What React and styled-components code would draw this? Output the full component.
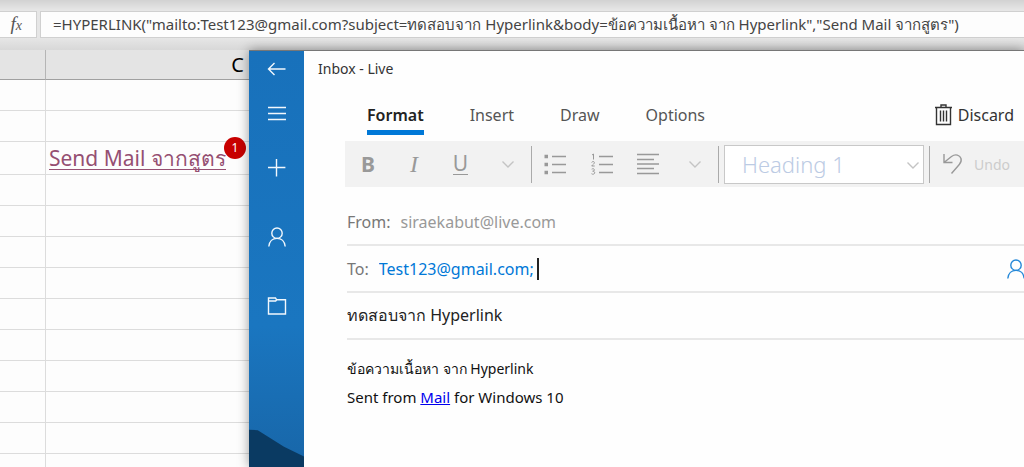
import React from "react";
import styled, { createGlobalStyle, css } from "styled-components";

const rows = [0, 1, 2, 3, 4, 5, 6, 7, 8, 9, 10, 11, 12];
const tabs = ["Format", "Insert", "Draw", "Options"];

const formulaText =
  '=HYPERLINK("mailto:Test123@gmail.com?subject=ทดสอบจาก Hyperlink&body=ข้อความเนื้อหา จาก Hyperlink","Send Mail จากสูตร")';

const PersonIcon = () => (
  <Icon viewBox="0 0 20 20">
    <circle cx="10" cy="6.2" r="5.2" />
    <path d="M1.8 19.5c.5-5 3.8-8.1 8.2-8.1s7.7 3.1 8.2 8.1" />
  </Icon>
);

const ChevronIcon = () => (
  <Icon $size={14} viewBox="0 0 14 14">
    <path d="M1.5 4.500 7 10l5.500-5.500" />
  </Icon>
);

function Sidebar() {
  return (
    <Side>
      <SideBtn $height={35} aria-label="Back">
        <Icon viewBox="0 0 20 20">
          <path d="M18.500 10H1.500M7.500 4 1.500 10l6 6" />
        </Icon>
      </SideBtn>
      <SideBtn $height={55} aria-label="Menu">
        <Icon viewBox="0 0 20 20">
          <path d="M1 3.500h18M1 9.500h18M1 15.500h18" />
        </Icon>
      </SideBtn>
      <SideBtn $height={54} aria-label="New mail">
        <Icon viewBox="0 0 20 20">
          <path d="M9.500 1v17.500M1 9.500h17.400" />
        </Icon>
      </SideBtn>
      <SideBtn $height={83} aria-label="Accounts">
        <PersonIcon />
      </SideBtn>
      <SideBtn $height={55} aria-label="Folders">
        <Icon viewBox="0 0 20 20">
          <path d="M1.500 2h7l1.200 1.800h8.800V18h-17zM1.500 5h7.200l1-1.200" />
        </Icon>
      </SideBtn>
    </Side>
  );
}

function Toolbar() {
  return (
    <Tools>
      <ToolBtn $width={46} $bold aria-label="Bold">
        B
      </ToolBtn>
      <ToolBtn $width={46} $italic aria-label="Italic">
        I
      </ToolBtn>
      <ToolBtn $width={47} aria-label="Underline">
        <Under>U</Under>
      </ToolBtn>
      <ToolBtn $width={47} $pale aria-label="More font formatting">
        <ChevronIcon />
      </ToolBtn>
      <Divider />
      <ToolBtn $width={46} aria-label="Bullets">
        <Icon $size={22} viewBox="0 0 22 22">
          <path d="M8 3.500h14M8 11.500h14M8 19.500h14" />
          <path d="M.5 3.500h3.500M.5 11.500h3.500M.5 19.500h3.500" strokeWidth="3.500" />
        </Icon>
      </ToolBtn>
      <ToolBtn $width={47} aria-label="Numbering">
        <Icon $size={22} viewBox="0 0 22 22">
          <path d="M8 3.500h14M8 11.500h14M8 19.500h14" />
          <path
            d="M1 2l1.500-1v5.500M.7 9.500c.6-1.500 3-1.200 2.600.4-.2 1-1.500 1.700-2.600 3.100h3M.7 16.200c1.300-1 3-.3 2.600 1-.2.800-1 1-1.600 1 .8 0 2 .3 2 1.500 0 1.500-2 2-3.200 1"
            strokeWidth="1"
          />
        </Icon>
      </ToolBtn>
      <ToolBtn $width={46} aria-label="Align left">
        <Icon $size={22} viewBox="0 0 22 22">
          <path d="M0 1.500h22M0 6.500h17M0 11h22M0 15.500h17M0 20.500h22" />
        </Icon>
      </ToolBtn>
      <ToolBtn $width={47} $pale aria-label="More paragraph formatting">
        <ChevronIcon />
      </ToolBtn>
      <Divider />
      <SelectBox>
        <Select aria-label="Text style" defaultValue="Heading 1">
          <option>Heading 1</option>
        </Select>
        <SelectArrow>
          <ChevronIcon />
        </SelectArrow>
      </SelectBox>
      <Divider />
      <UndoBtn>
        <Icon $size={22} viewBox="0 0 22 22">
          <path d="M2 1v8.500h8.500M2 9.500l7.500-6c4-3 8.500-1.500 9.500 2 .7 2.500-.2 4.300-1.700 6L9.500 20.500" />
        </Icon>
        <span>Undo</span>
      </UndoBtn>
    </Tools>
  );
}

function Mail() {
  const [to, setTo] = React.useState("Test123@gmail.com;");
  const [subject, setSubject] = React.useState("ทดสอบจาก Hyperlink");

  return (
    <Compose>
      <Title>Inbox - Live</Title>
      <TabBar>
        {tabs.map((tab, i) => (
          <Tab key={tab} $active={i === 0}>
            {tab}
          </Tab>
        ))}
        <Discard>
          <Icon $size={22} viewBox="0 0 22 22">
            <path d="M3 3.500h17M9 3.500V1h5v2.500M4.500 3.500V20.500h14V3.500M8.500 6.500v11M11.500 6.500v11M14.500 6.500v11" />
          </Icon>
          Discard
        </Discard>
      </TabBar>
      <Toolbar />
      <Field $first>
        <span>From:</span>
        <From>siraekabut@live.com</From>
      </Field>
      <Field>
        <label htmlFor="to">To:</label>
        <ToInput id="to" value={to} onChange={(e) => setTo(e.target.value)} />
        <Caret />
        <Contact aria-label="Choose contacts">
          <PersonIcon />
        </Contact>
      </Field>
      <Field>
        <SubjectInput
          aria-label="Subject"
          value={subject}
          onChange={(e) => setSubject(e.target.value)}
        />
      </Field>
      <Message>
        <p>ข้อความเนื้อหา จาก Hyperlink</p>
        <Signature>
          Sent from <a href="#mail">Mail</a> for Windows 10
        </Signature>
      </Message>
    </Compose>
  );
}

function App() {
  const [formula, setFormula] = React.useState(formulaText);

  return (
    <Page>
      <GlobalStyle />
      <FormulaBar>
        <Fx aria-label="Insert function">
          <i>f</i>
          <small>x</small>
        </Fx>
        <FormulaInput
          aria-label="Formula"
          value={formula}
          onChange={(e) => setFormula(e.target.value)}
        />
      </FormulaBar>
      <Main>
        <Sheet>
          <Grid>
            <thead>
              <tr>
                <Head $narrow />
                <Head>C</Head>
              </tr>
            </thead>
            <tbody>
              {rows.map((row) => (
                <tr key={row}>
                  <Cell />
                  <Cell>
                    {row === 2 && (
                      <CellLink href="mailto:Test123@gmail.com">
                        Send Mail จากสูตร
                        <Badge>1</Badge>
                      </CellLink>
                    )}
                  </Cell>
                </tr>
              ))}
            </tbody>
          </Grid>
        </Sheet>
        <MailWindow>
          <Sidebar />
          <Mail />
        </MailWindow>
      </Main>
    </Page>
  );
}

const GlobalStyle = createGlobalStyle`
  * {
    box-sizing: border-box;
  }
  body {
    margin: 0;
    font-family: "Noto Sans", "Open Sans", sans-serif;
    font-size: 15px;
    overflow: hidden;
  }
  button, input, select {
    font: inherit;
    color: inherit;
    border: 0;
    padding: 0;
    margin: 0;
    background: none;
    outline: none;
  }
`;

const Page = styled.div`
  display: flex;
  flex-direction: column;
  height: 100vh;
  background: #e6e6e6;
`;

const FormulaBar = styled.div`
  display: flex;
  gap: 3px;
  padding: 11px 0 12px;
  background: linear-gradient(#d2d2d2, #e6e6e6 10px, #e6e6e6 38px, #d8d8d8);
`;

const Fx = styled.button`
  width: 37px;
  height: 27px;
  padding-right: 14px;
  background: #fdfdfd;
  border: 1px solid #d0d0d0;
  border-left: 0;
  color: #555;
  font-family: "Liberation Serif", serif;
  font-size: 19px;
  line-height: 20px;
  text-align: right;

  small {
    font-size: 14px;
    font-style: italic;
  }
`;

const FormulaInput = styled.input`
  flex: 1;
  min-width: 0;
  height: 27px;
  padding-left: 12px;
  background: #fdfdfd;
  border: 1px solid #d0d0d0;
  border-right: 0;
  color: #444;
  font-size: 15px;
`;

const Main = styled.div`
  flex: 1;
  min-height: 0;
  display: flex;
`;

const Sheet = styled.div`
  width: 249px;
  flex-shrink: 0;
  overflow: hidden;
  background: #fdfdfd;
`;

const Grid = styled.table`
  width: 100%;
  table-layout: fixed;
  border-collapse: separate;
  border-spacing: 0;
`;

const Head = styled.th`
  width: ${(props) => (props.$narrow ? "46px" : "auto")};
  height: 30px;
  padding: 0 5px 0 0;
  background: #e4e4e4;
  border-right: ${(props) => (props.$narrow ? "1px solid #b5b5b5" : "0")};
  border-bottom: 1px solid #a0a0a0;
  font-size: 20px;
  line-height: 24px;
  font-weight: 400;
  text-align: right;
`;

const Cell = styled.td`
  height: 31px;
  padding: 0 0 0 3px;
  border-bottom: 1px solid #dcdcdc;
  line-height: 28px;
  white-space: nowrap;

  &:first-child {
    border-right: 1px solid #dcdcdc;
  }
`;

const CellLink = styled.a`
  position: relative;
  display: inline-block;
  height: 28px;
  color: #954f72;
  font-size: 21px;
  line-height: 32px;
  text-decoration: none;
  border-bottom: 1px solid #954f72;
`;

const Badge = styled.span`
  position: absolute;
  left: 100%;
  top: -5px;
  width: 22px;
  height: 22px;
  margin-left: -2px;
  border-radius: 50%;
  background: #c80000;
  color: #fff;
  font-size: 12px;
  line-height: 22px;
  text-align: center;
`;

const MailWindow = styled.div`
  position: relative;
  flex: 1;
  min-width: 0;
  display: flex;
  background: #fefefe;
  border-top: 1px solid #777;
  box-shadow: 0 0 11px rgba(0, 0, 0, 0.4);
`;

const Side = styled.nav`
  position: relative;
  width: 55px;
  flex-shrink: 0;
  display: flex;
  flex-direction: column;
  overflow: hidden;
  color: #f2f8fd;
  background: linear-gradient(#1871bb, #1a76c0 66%, #1866a8);

  &::after {
    content: "";
    position: absolute;
    left: -10px;
    right: -10px;
    bottom: -10px;
    height: 52px;
    background: #0a3a62;
    clip-path: polygon(0 8%, 25% 10%, 60% 42%, 100% 70%, 100% 100%, 0 100%);
    filter: blur(2px);
  }
`;

const SideBtn = styled.button`
  height: ${(props) => props.$height}px;
  display: flex;
  align-items: center;
  justify-content: center;
`;

const Icon = styled.svg`
  display: block;
  flex-shrink: 0;
  width: ${(props) => props.$size || 20}px;
  height: ${(props) => props.$size || 20}px;
  fill: none;
  stroke: currentColor;
  stroke-width: 1.4;
`;

const Compose = styled.main`
  flex: 1;
  min-width: 0;
  overflow: hidden;
`;

const Title = styled.div`
  padding: 8px 14px 0;
  color: #333;
  font-size: 14px;
  line-height: 20px;
`;

const TabBar = styled.div`
  display: flex;
  align-items: flex-start;
  gap: 46px;
  padding: 23px 10px 6px 63px;
`;

const Tab = styled.button`
  height: 33px;
  padding-bottom: 3px;
  color: #555;
  font-size: 16px;
  line-height: 24px;
  border-bottom: 5px solid transparent;

  ${(props) =>
    props.$active &&
    css`
      color: #222;
      font-weight: 600;
      border-color: #0078d7;
    `}
`;

const Discard = styled.button`
  display: flex;
  align-items: center;
  gap: 4px;
  height: 26px;
  margin-left: auto;
  color: #333;
  font-size: 16px;
`;

const Tools = styled.div`
  display: flex;
  align-items: center;
  height: 46px;
  margin-left: 41px;
  background: #f2f2f2;
  color: #999;
`;

const ToolBtn = styled.button`
  width: ${(props) => props.$width}px;
  height: 38px;
  flex-shrink: 0;
  display: flex;
  align-items: center;
  justify-content: center;
  color: ${(props) => (props.$pale ? "#c4c4c4" : "#999")};
  font-size: 21px;
  line-height: 28px;
  font-weight: ${(props) => (props.$bold ? 700 : 400)};

  ${(props) =>
    props.$italic &&
    css`
      font-family: "Liberation Serif", serif;
      font-style: italic;
      font-size: 24px;
    `}
`;

const Under = styled.span`
  height: 22px;
  line-height: 20px;
  border-bottom: 1px solid #999;
`;

const Divider = styled.span`
  width: 1px;
  height: 37px;
  flex-shrink: 0;
  background: #aaa;
`;

const SelectBox = styled.div`
  position: relative;
  width: 200px;
  margin: 0 5px;
  flex-shrink: 0;
`;

const Select = styled.select`
  appearance: none;
  width: 100%;
  height: 39px;
  padding-left: 17px;
  background: #fff;
  border: 1px solid #c8c8c8;
  color: #bccbe4;
  font-size: 22px;
  font-weight: 300;
`;

const SelectArrow = styled.span`
  position: absolute;
  right: 4px;
  top: 13px;
  color: #c4c4c4;
  pointer-events: none;
`;

const UndoBtn = styled.button`
  display: flex;
  align-items: center;
  gap: 10px;
  padding-left: 12px;
  font-size: 14px;

  span {
    color: #ccc;
  }
`;

const Field = styled.div`
  display: flex;
  align-items: center;
  gap: 10px;
  height: ${(props) => (props.$first ? 59 : 47)}px;
  padding-top: ${(props) => (props.$first ? 12 : 0)}px;
  margin-left: 43px;
  border-bottom: 2px solid #e8e8e8;
  color: #777;
  font-size: 16px;
`;

const From = styled.span`
  color: #999;
`;

const ToInput = styled.input`
  field-sizing: content;
  color: #0078d7;
`;

const Caret = styled.span`
  width: 2px;
  height: 22px;
  margin-left: -7px;
  background: #222;
`;

const Contact = styled.button`
  margin-left: auto;
  margin-right: -2px;
  color: #2488d8;
`;

const SubjectInput = styled.input`
  width: 100%;
  color: #222;
`;

const Message = styled.div`
  padding: 15px 10px 0 43px;
  color: #111;
  font-size: 14px;
  line-height: 28px;

  p {
    margin: 0;
  }

  a {
    color: #0000ee;
  }
`;

const Signature = styled.p`
  font-size: 15px;
`;

export default App;
